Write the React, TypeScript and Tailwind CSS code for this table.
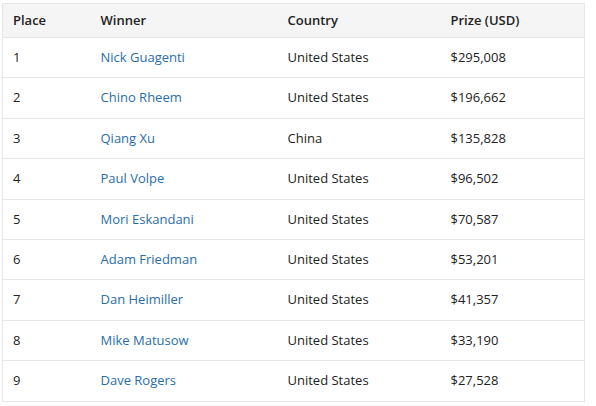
const rows = [
  { place: 1, winner: 'Nick Guagenti', country: 'United States', prize: '$295,008' },
  { place: 2, winner: 'Chino Rheem', country: 'United States', prize: '$196,662' },
  { place: 3, winner: 'Qiang Xu', country: 'China', prize: '$135,828' },
  { place: 4, winner: 'Paul Volpe', country: 'United States', prize: '$96,502' },
  { place: 5, winner: 'Mori Eskandani', country: 'United States', prize: '$70,587' },
  { place: 6, winner: 'Adam Friedman', country: 'United States', prize: '$53,201' },
  { place: 7, winner: 'Dan Heimiller', country: 'United States', prize: '$41,357' },
  { place: 8, winner: 'Mike Matusow', country: 'United States', prize: '$33,190' },
  { place: 9, winner: 'Dave Rogers', country: 'United States', prize: '$27,528' },
];

const App = () => {
  return (
    <div className="w-[596px] h-[406px] bg-white pt-[3px] pl-[2px]" style={{ fontFamily: '"Open Sans", sans-serif' }}>
      <table className="w-[583px] border-collapse border border-[#e6e6e6] text-[13px] text-[#222] table-fixed">
        <colgroup>
          <col className="w-[88px]" />
          <col className="w-[187px]" />
          <col className="w-[163px]" />
          <col />
        </colgroup>
        <thead>
          {/* Header */}
          <tr className="h-[34px] bg-[#f5f5f5] text-left">
            <th className="pl-[10px] font-semibold">Place</th>
            <th className="pl-[10px] font-semibold">Winner</th>
            <th className="pl-[10px] font-semibold">Country</th>
            <th className="pl-[10px] font-semibold">Prize (USD)</th>
          </tr>
        </thead>
        <tbody>
          {rows.map((r) => (
            <tr key={r.place} className="h-[40.4px] border-t border-[#e6e6e6]">
              <td className="pl-[10px]">{r.place}</td>
              <td className="pl-[10px]">
                <a href="#" className="text-[#2a6ea6]">{r.winner}</a>
              </td>
              <td className="pl-[10px]">{r.country}</td>
              <td className="pl-[10px]">{r.prize}</td>
            </tr>
          ))}
        </tbody>
      </table>
    </div>
  );
};

export default App;
